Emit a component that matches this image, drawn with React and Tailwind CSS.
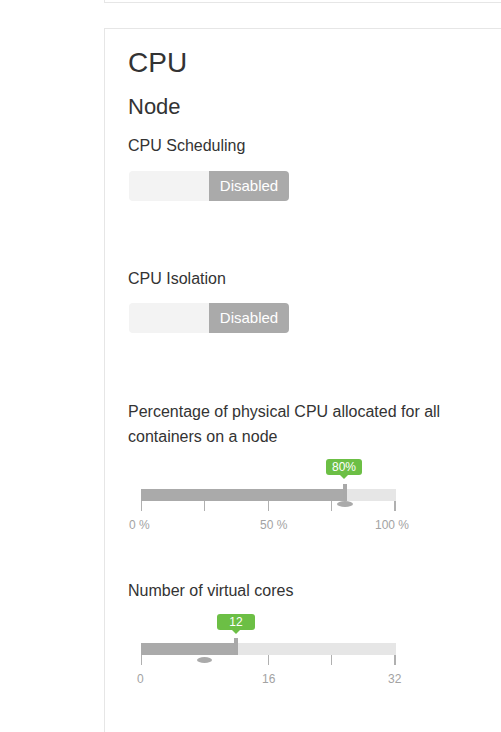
import React from "react";

function Switch() {
  return (
    <div className="flex h-[30px] w-[160px] overflow-hidden rounded-[4px]">
      <div className="w-[80px] bg-[#f3f3f3]" />
      <div className="flex w-[80px] items-center justify-center bg-[#aaaaaa] text-[15px] leading-[18px] text-white">
        Disabled
      </div>
    </div>
  );
}

function Slider({ value, max, tip, tipClass, handleClass, ellipseClass, tickShown, labels, areaClass, labelGap }) {
  const fillPct = (value / max) * 100;
  return (
    <div className="ml-[13px] w-[255px]">
      <div className={"relative " + areaClass}>
        <div
          className={
            "absolute top-0 flex h-[16px] items-center justify-center rounded-[3px] bg-[#6cbf45] text-[12px] leading-[14px] text-white " +
            tipClass
          }
        >
          {tip}
          <span className="absolute left-1/2 top-full h-0 w-0 -translate-x-1/2 border-x-[4px] border-t-[4px] border-x-transparent border-t-[#6cbf45]" />
        </div>
      </div>
      <div className="relative h-[12px] bg-[#e6e6e6]">
        <div className="h-full bg-[#aaaaaa]" style={{ width: fillPct + "%" }} />
        <div className={"absolute bottom-0 h-[17px] w-[4px] bg-[#a9a9a9] " + handleClass} />
        <div className={"absolute h-[6px] rounded-[50%] bg-[#aaaaaa] " + ellipseClass} />
      </div>
      <div className="flex h-[10px] justify-between">
        {tickShown.map((shown, i) => (
          <div
            key={i}
            className={
              (i === tickShown.length - 1 ? "w-[2px] " : "w-px ") +
              (shown ? "bg-[#b0b0b0]" : "bg-transparent")
            }
          />
        ))}
      </div>
      <div className={"relative h-[14px] text-[12px] leading-[14px] text-[#a3a3a3] " + labelGap}>
        {labels.map((l) => (
          <span key={l.text} className={"absolute top-0 whitespace-nowrap " + l.cls}>
            {l.text}
          </span>
        ))}
      </div>
    </div>
  );
}

export default function App() {
  return (
    <div className="h-[732px] w-full overflow-hidden bg-white font-['Liberation_Sans',Arial,sans-serif] text-[#333333]">
      <div className="ml-[104px] h-[3px] border-b border-l border-[#e6e6e6]" />
      <div className="ml-[104px] mt-[25px] h-[720px] border-l border-t border-[#e6e6e6] pl-[23px] pt-[18px]">
        <h1 className="text-[28px] font-normal leading-[32px]">CPU</h1>
        <h2 className="mt-[15px] text-[22px] font-normal leading-[26px]">Node</h2>

        <div className="mt-[16px] text-[16px] leading-[20px]">CPU Scheduling</div>
        <div className="mt-[15px] pl-px">
          <Switch />
        </div>

        <div className="mt-[68px] text-[16px] leading-[20px]">CPU Isolation</div>
        <div className="mt-[14px] pl-px">
          <Switch />
        </div>

        <div className="mt-[66px] w-[330px] text-[16px] leading-[25px]">
          Percentage of physical CPU allocated for all containers on a node
        </div>
        <div className="mt-[10px]">
          <Slider
            value={80}
            max={100}
            tip="80%"
            areaClass="h-[30px]"
            tipClass="left-[185px] w-[36px]"
            handleClass="left-[202px]"
            ellipseClass="left-[196px] top-[12px] w-[16px]"
            tickShown={[true, true, true, true, true]}
            labelGap="mt-[7px]"
            labels={[
              { text: "0 %", cls: "left-[-12px]" },
              { text: "50 %", cls: "left-[119px]" },
              { text: "100 %", cls: "left-[234px]" },
            ]}
          />
        </div>

        <div className="mt-[49px] text-[16px] leading-[20px]">Number of virtual cores</div>
        <div className="mt-[13px]">
          <Slider
            value={11.9}
            max={32}
            tip="12"
            areaClass="h-[29px]"
            tipClass="left-[76px] w-[38px]"
            handleClass="left-[93px]"
            ellipseClass="left-[56px] top-[14px] w-[15px]"
            tickShown={[true, false, true, true, true]}
            labelGap="mt-[7px]"
            labels={[
              { text: "0", cls: "left-[-4px]" },
              { text: "16", cls: "left-[121px]" },
              { text: "32", cls: "left-[247px]" },
            ]}
          />
        </div>
      </div>
    </div>
  );
}
